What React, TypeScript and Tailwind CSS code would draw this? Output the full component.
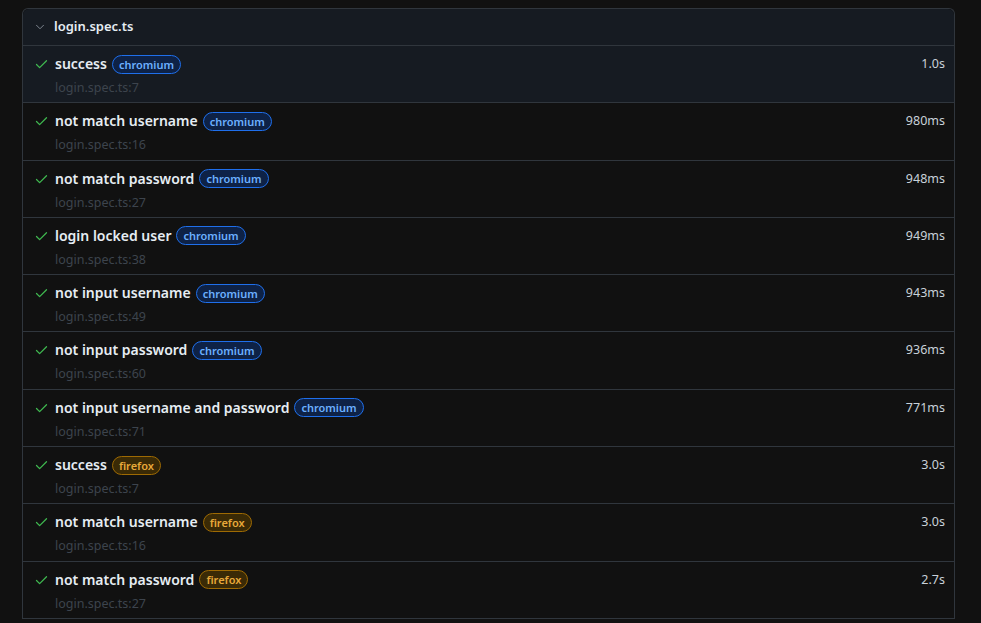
import { ChevronDown, Check } from "lucide-react";

type TestRow = {
  title: string;
  browser: "chromium" | "firefox";
  line: number;
  duration: string;
};

const rows: TestRow[] = [
  { title: "success", browser: "chromium", line: 7, duration: "1.0s" },
  { title: "not match username", browser: "chromium", line: 16, duration: "980ms" },
  { title: "not match password", browser: "chromium", line: 27, duration: "948ms" },
  { title: "login locked user", browser: "chromium", line: 38, duration: "949ms" },
  { title: "not input username", browser: "chromium", line: 49, duration: "943ms" },
  { title: "not input password", browser: "chromium", line: 60, duration: "936ms" },
  { title: "not input username and password", browser: "chromium", line: 71, duration: "771ms" },
  { title: "success", browser: "firefox", line: 7, duration: "3.0s" },
  { title: "not match username", browser: "firefox", line: 16, duration: "3.0s" },
  { title: "not match password", browser: "firefox", line: 27, duration: "2.7s" },
];

function Badge({ browser }: { browser: TestRow["browser"] }) {
  if (browser === "firefox") {
    return (
      <span className="ml-[5px] rounded-full border border-[#9e6a03] bg-[#3a2a06] px-[6px] text-[11px] font-semibold leading-[17px] text-[#e8a93a]">
        firefox
      </span>
    );
  }
  return (
    <span className="ml-[5px] rounded-full border border-[#1f6feb] bg-[#0e2246] px-[6px] text-[11px] font-semibold leading-[17px] text-[#6cb0ff]">
      chromium
    </span>
  );
}

export default function App() {
  return (
    <div className="h-[623px] overflow-hidden bg-[#111111] px-[22px] pt-[8px] font-['Noto_Sans','Open_Sans',sans-serif]">
      <div className="w-[933px] rounded-t-md border border-b-0 border-[#30363d]">
        <div className="flex h-[37px] items-center gap-[7px] rounded-t-md border-b border-[#30363d] bg-[#161b22] pl-[10px]">
          <ChevronDown size={14} strokeWidth={1.5} className="text-[#8b949e]" />
          <span className="text-[13px] font-semibold text-[#e6edf3]">login.spec.ts</span>
        </div>
        {rows.map((r, i) => (
          <div
            key={i}
            className={
              "flex h-[57.3px] border-b border-[#30363d] pl-[11px] pr-[9px] " +
              (i === 0 ? "bg-[#161b22]" : "")
            }
          >
            <Check size={15} strokeWidth={2} className="mt-[11px] text-[#3fb950]" />
            <div className="ml-[6px] flex-1 pt-[8px]">
              <div className="flex items-center">
                <span className="text-[14px] font-semibold leading-[20px] text-[#e6edf3]">{r.title}</span>
                <Badge browser={r.browser} />
              </div>
              <div className="mt-[5px] text-[12.5px] leading-[18px] text-[#3d444d]">
                login.spec.ts:{r.line}
              </div>
            </div>
            <div className="pt-[9px] text-[12.5px] leading-[18px] text-[#c9d1d9]">{r.duration}</div>
          </div>
        ))}
      </div>
    </div>
  );
}
